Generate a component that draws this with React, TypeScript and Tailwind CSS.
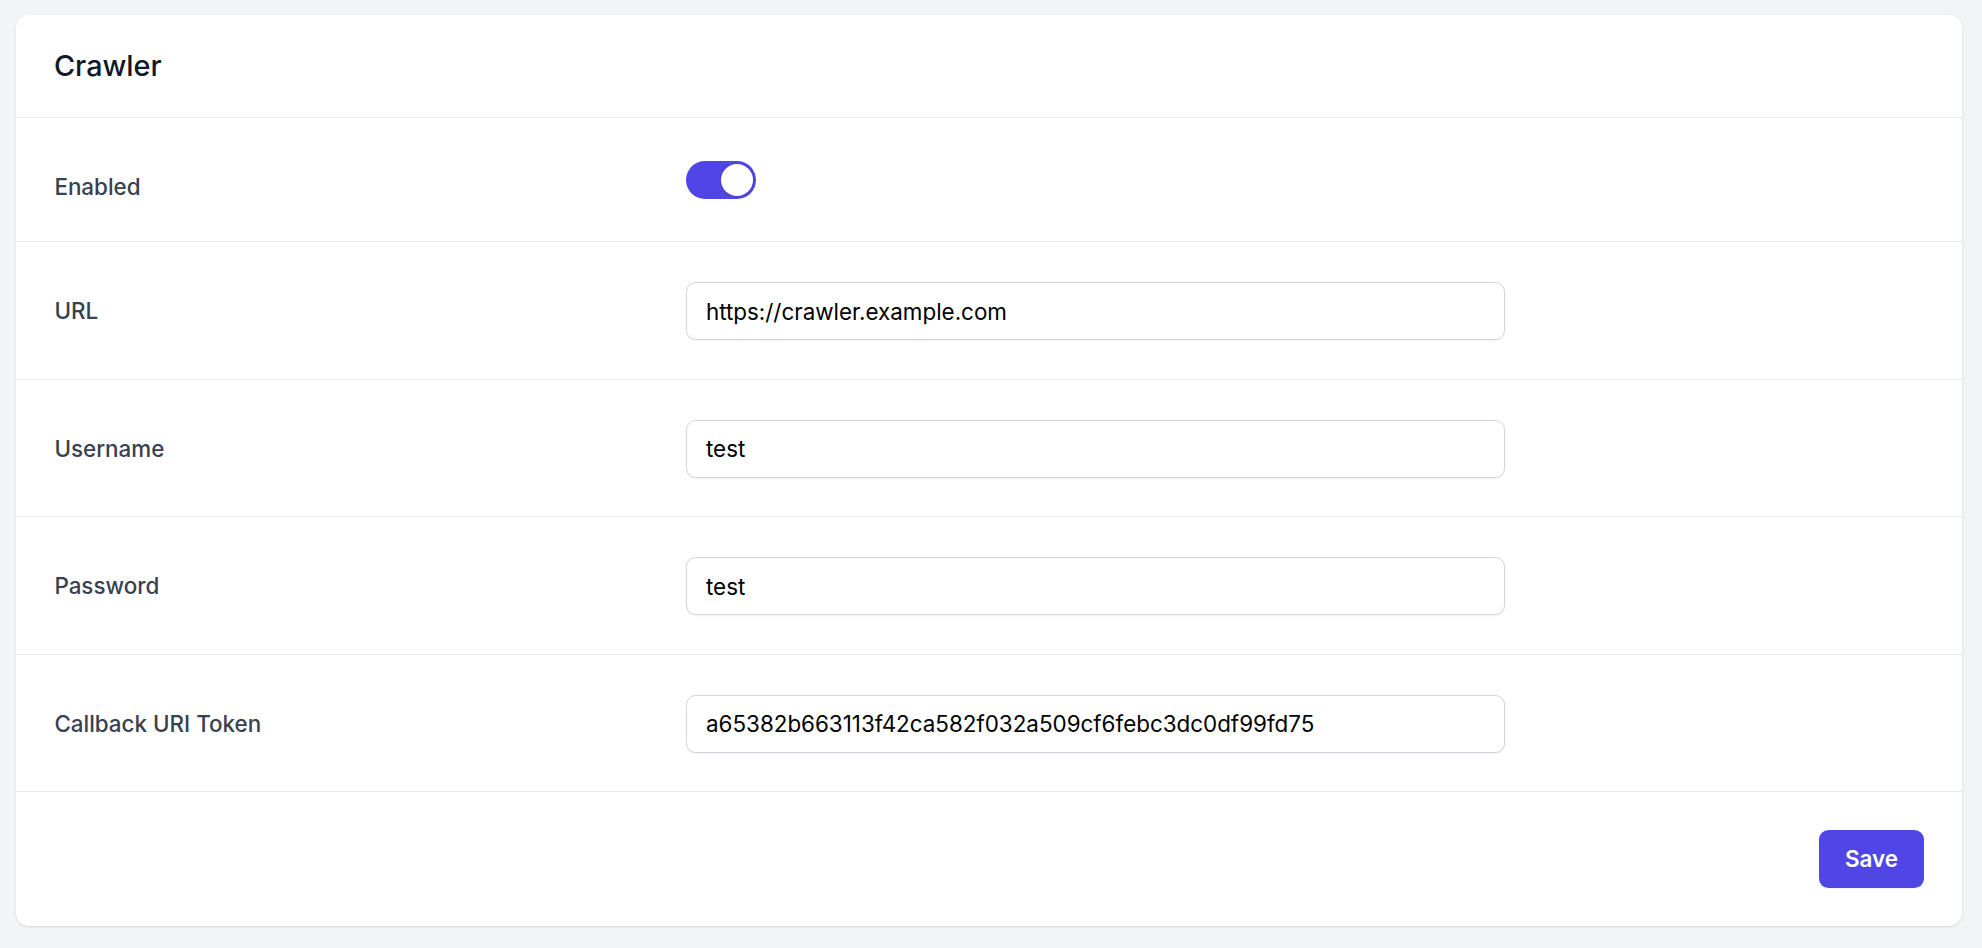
import { useState } from "react";

const fields = [
  { label: "URL", value: "https://crawler.example.com" },
  { label: "Username", value: "test" },
  { label: "Password", value: "test" },
  {
    label: "Callback URI Token",
    value: "a65382b663113f42ca582f032a509cf6febc3dc0df99fd75",
  },
];

function Toggle({ on, onChange }: { on: boolean; onChange: () => void }) {
  return (
    <button
      type="button"
      onClick={onChange}
      className={`flex h-[38px] w-[70px] shrink-0 items-center rounded-full border-[3px] border-transparent transition-colors ${
        on ? "bg-[#4f46e5]" : "bg-[#e5e7eb]"
      }`}
    >
      <span
        className={`h-[32px] w-[32px] rounded-full bg-white shadow transition-transform ${
          on ? "translate-x-[32px]" : "translate-x-0"
        }`}
      />
    </button>
  );
}

export default function App() {
  const [enabled, setEnabled] = useState(true);

  return (
    <div className="min-h-screen bg-[#f3f4f6] pt-[15px] pb-[21px] pl-[16px] pr-[20px] font-['Inter',sans-serif]">
      <div className="rounded-[13px] bg-white shadow-[0_1px_3px_0_rgba(0,0,0,0.1),0_1px_2px_-1px_rgba(0,0,0,0.1)]">
        <div className="border-b border-[#e5e7eb] px-[38px] py-[32px]">
          <h3 className="text-[28.8px] leading-[38px] font-medium text-[#111827]">Crawler</h3>
        </div>

        <div className="grid grid-cols-3 items-start gap-[25.6px] border-b border-[#e5e7eb] px-[38.4px] pt-[43px] pb-[38px]">
          <span className="pt-[10px] text-[22.4px] leading-[32px] font-medium text-[#374151]">Enabled</span>
          <div className="col-span-2">
            <Toggle on={enabled} onChange={() => setEnabled(!enabled)} />
          </div>
        </div>

        {fields.map((f) => (
          <div
            key={f.label}
            className="grid grid-cols-3 items-center gap-[25.6px] border-b border-[#e5e7eb] px-[38.4px] pt-[40px] pb-[38.5px]"
          >
            <label className="text-[22.4px] leading-[32px] font-medium text-[#374151]">{f.label}</label>
            <div className="col-span-2">
              <input
                defaultValue={f.value}
                className="block h-[58px] w-full max-w-[819px] rounded-[9.6px] border border-[#d1d5db] bg-white px-[19px] text-[22.4px] text-black shadow-[0_1px_2px_0_rgba(0,0,0,0.05)] outline-none"
              />
            </div>
          </div>
        ))}

        <div className="flex justify-end px-[38.4px] py-[38px]">
          <button
            type="button"
            className="h-[58px] rounded-[9.6px] bg-[#4f46e5] px-[25.6px] text-[22.4px] font-semibold text-white shadow-[0_1px_2px_0_rgba(0,0,0,0.05)]"
          >
            Save
          </button>
        </div>
      </div>
    </div>
  );
}
